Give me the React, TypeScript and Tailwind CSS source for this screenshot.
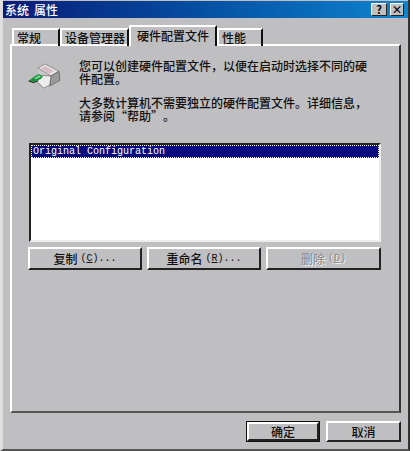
import React from 'react';

const cjk = { fontFamily: '"Noto Sans CJK SC", "Liberation Sans", sans-serif' };
const mono = { fontFamily: '"Liberation Mono", monospace' };

const Tab = ({ label, className }: { label: string; className: string }) => (
  <div
    className={`flex h-[18px] items-center border-t-2 border-l-2 border-r-2 border-t-white border-l-white border-r-[#111] pl-[3px] text-[12px] font-medium text-[#111] ${className}`}
  >
    {label}
  </div>
);

const Btn = ({ children, className = '' }: { children: React.ReactNode; className?: string }) => (
  <div
    className={`flex items-center justify-center border-2 border-t-white border-l-white border-r-[#222] border-b-[#222] text-[12px] font-medium ${className}`}
  >
    {children}
  </div>
);

const Latin = ({ children }: { children: React.ReactNode }) => (
  <span className="text-[10px]" style={mono}>
    {children}
  </span>
);

const Quote = ({ children }: { children: React.ReactNode }) => (
  <span className="inline-block w-[12px] text-center">{children}</span>
);

// traced from the reference crop, 3 units to a pixel
const DriveIcon = () => (
  <svg width="33" height="26" viewBox="39 39 99 78">
    <path d="M68 54 L90 42 L133 64 L136 92 L88 116 L72 92 Z" fill="#c9c9c9" />
    <path d="M68 54 L90 42 L132 64 L108 78 Z" fill="#e4e4e4" stroke="#707070" strokeWidth="2" />
    <path d="M76 56 L90 49 L116 63 L102 71 Z" fill="#d8bcc4" />
    <path d="M108 78 L132 64 L135 91 L104 108 Z" fill="#9c9c9c" stroke="#505050" strokeWidth="2" />
    <path d="M58 88 L76 76 L108 78 L104 106 L86 114 Z" fill="#ececec" stroke="#606060" strokeWidth="2" />
    <path d="M41 92 L60 78 L72 72 L84 80 L76 88 L56 96 Z" fill="#14923a" />
    <path d="M58 84 L74 76 L78 80 L62 88 Z" fill="#86dc9a" />
    <path d="M41 93 L56 98 L70 92" fill="none" stroke="#1a1a1a" strokeWidth="3" />
  </svg>
);

export default function App() {
  return (
    <div className="h-[451px] w-[413px] overflow-hidden bg-white" style={cjk}>
      <div className="flex h-[451px] w-[410px] flex-col border-l-[3px] border-r-2 border-b-2 border-l-[#dedede] border-r-[#333] border-b-[#555] bg-[#bfbfc1] pt-[1px]">
        <div className="flex h-[17px] shrink-0 items-center justify-between bg-gradient-to-r from-[#0a1a78] to-[#1084d0] pl-[2px] pr-[4px]">
          <span className="text-[12px] font-medium leading-none text-white">
            系统<span className="ml-[5px]">属性</span>
          </span>
          <div className="flex gap-[3px]">
            <div className="flex h-[13px] w-[16px] items-center justify-center border border-t-white border-l-white border-r-[#222] border-b-[#222] bg-[#c0c0c0] text-[11px] font-bold leading-none text-black">?</div>
            <div className="flex h-[13px] w-[14px] items-center justify-center border border-t-white border-l-white border-r-[#222] border-b-[#222] bg-[#c0c0c0] text-[11px] font-bold leading-none text-black">×</div>
          </div>
        </div>

        <div className="flex flex-1 flex-col pt-[7px] pl-[7px] pr-[6px]">
          <div className="relative z-10 flex h-[21px] items-end pl-[2px]">
            <Tab label="常规" className="w-[48px]" />
            <Tab label="设备管理器" className="w-[69px]" />
            <div className="flex h-[21px] w-[88px] items-start border-t-2 border-l-2 border-r-2 border-t-white border-l-white border-r-[#111] bg-[#bfbfc1] pt-[1px] pl-[6px] text-[12px] font-medium leading-[15px] text-[#111]">硬件配置文件</div>
            <Tab label="性能" className="w-[46px]" />
          </div>

          <div className="-mt-[2px] flex h-[369px] w-[391px] flex-col border-2 border-t-white border-l-white border-r-[#333] border-b-[#555] pt-[10px] pl-[17px] pr-[17px]">
            <div className="flex h-[79px]">
              <div className="-ml-[1px] w-[51px] pt-[7px]">
                <DriveIcon />
              </div>
              <div className="pt-[3px] text-[12px] font-medium leading-[13px] text-[#111]">
                <p>
                  您可以创建硬件配置文件，以便在启动时选择不同的硬
                  <br />
                  件配置。
                </p>
                <p className="mt-[11px]">
                  大多数计算机不需要独立的硬件配置文件。详细信息，
                  <br />
                  请参阅<Quote>“</Quote>帮助<Quote>”</Quote>。
                </p>
              </div>
            </div>

            <div className="mt-[8px] h-[99px] w-[352px] border-t-2 border-l-2 border-t-[#222] border-l-[#222] border-r-2 border-b-2 border-r-[#eee] border-b-[#eee] bg-white">
              <div className="h-[13px] border border-dotted border-white bg-[#0a0a80] pl-[1px] text-[10px] leading-[11px] text-white" style={mono}>
                Original Configuration
              </div>
            </div>

            <div className="-ml-[1px] mt-[5px] flex gap-[5px]">
              <Btn className="h-[23px] w-[114px] text-[#111]">
                复制<span className="ml-[3px]" /><Latin>(<span className="underline">C</span>)...</Latin>
              </Btn>
              <Btn className="h-[23px] w-[114px] text-[#111]">
                重命名<span className="ml-[3px]" /><Latin>(<span className="underline">R</span>)...</Latin>
              </Btn>
              <Btn className="h-[23px] w-[115px] text-[#8e8e8e] [text-shadow:1px_1px_0_#eee]">
                删除<span className="ml-[3px]" /><Latin>(<span className="underline">D</span>)</Latin>
              </Btn>
            </div>
          </div>

          <div className="mt-[8px] flex justify-end gap-[6px] pr-[1px]">
            <div className="h-[21px] w-[74px] border border-[#111]">
              <Btn className="h-full w-full text-[#111]">确定</Btn>
            </div>
            <Btn className="h-[21px] w-[75px] text-[#111]">取消</Btn>
          </div>
        </div>
      </div>
    </div>
  );
}
